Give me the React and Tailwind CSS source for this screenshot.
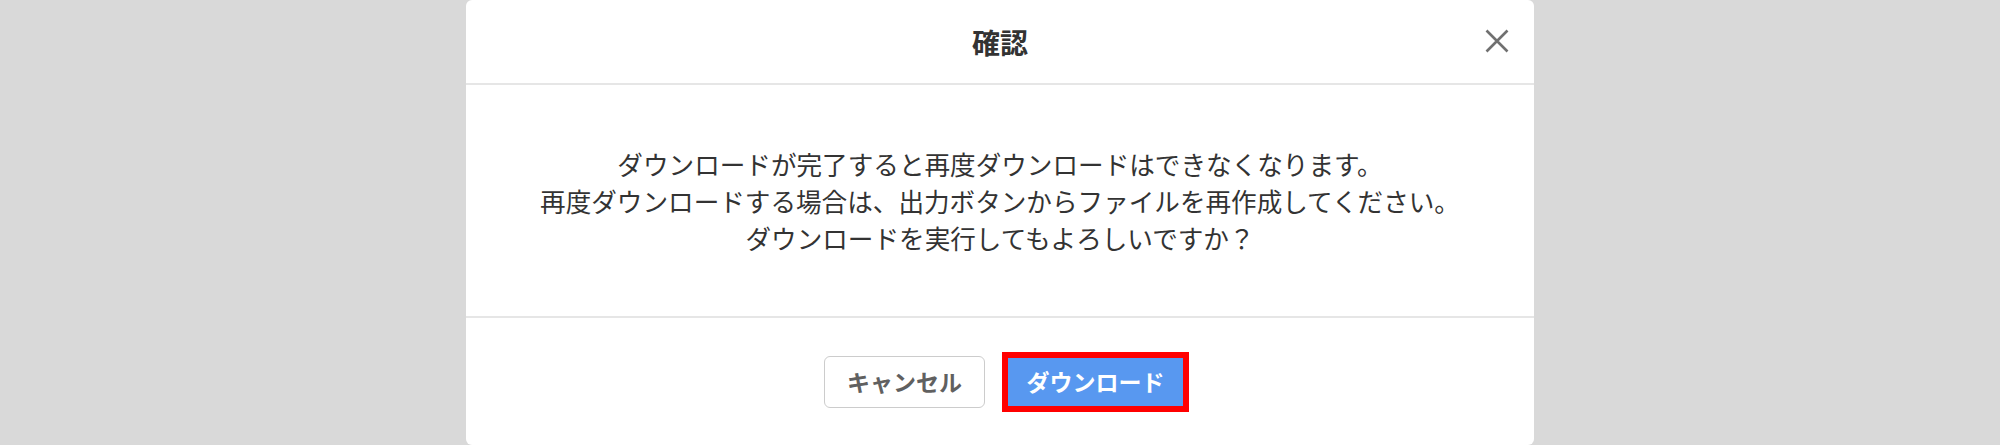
export default function App() {
  const lines = [
    "ダウンロードが完了すると再度ダウンロードはできなくなります。",
    "再度ダウンロードする場合は、出力ボタンからファイルを再作成してください。",
    "ダウンロードを実行してもよろしいですか？",
  ];

  return (
    <div
      className="w-full h-[445px] bg-[#d9d9d9] flex justify-center overflow-hidden"
      style={{ fontFamily: '"Noto Sans CJK JP", "Noto Sans", sans-serif' }}
    >
      <div className="w-[1068px] h-[445px] bg-white rounded-[6px] flex flex-col">
        {/* header */}
        <div className="relative h-[85px] flex items-center justify-center border-b-2 border-[#e6e6e6]">
          <h2 className="text-[28px] font-bold text-[#333333] leading-none">確認</h2>
          <button className="absolute right-[25px] top-[29px] w-6 h-6">
            <svg viewBox="0 0 24 24" className="w-6 h-6">
              <path d="M1.5 1.5 L22.5 22.5 M22.5 1.5 L1.5 22.5" stroke="#707070" strokeWidth="2.6" fill="none" />
            </svg>
          </button>
        </div>

        {/* body */}
        <div className="h-[233px] flex flex-col items-center justify-center border-b-2 border-[#e6e6e6] text-[25.6px] leading-[37px] text-[#333333]">
          {lines.map((line) => (
            <p key={line}>{line}</p>
          ))}
        </div>

        {/* footer */}
        <div className="flex-1 flex items-center justify-center gap-[21px] pl-[9px]">
          <button className="w-[161px] h-[52px] rounded-[6px] border-[1.5px] border-[#cccccc] bg-white text-[23px] font-bold text-[#606060]">
            キャンセル
          </button>
          <button className="w-[179px] h-[52px] bg-[#5898f0] text-[23px] font-bold text-white outline-[6px] outline-solid outline-[#ff0000] -outline-offset-2">
            ダウンロード
          </button>
        </div>
      </div>
    </div>
  );
}
